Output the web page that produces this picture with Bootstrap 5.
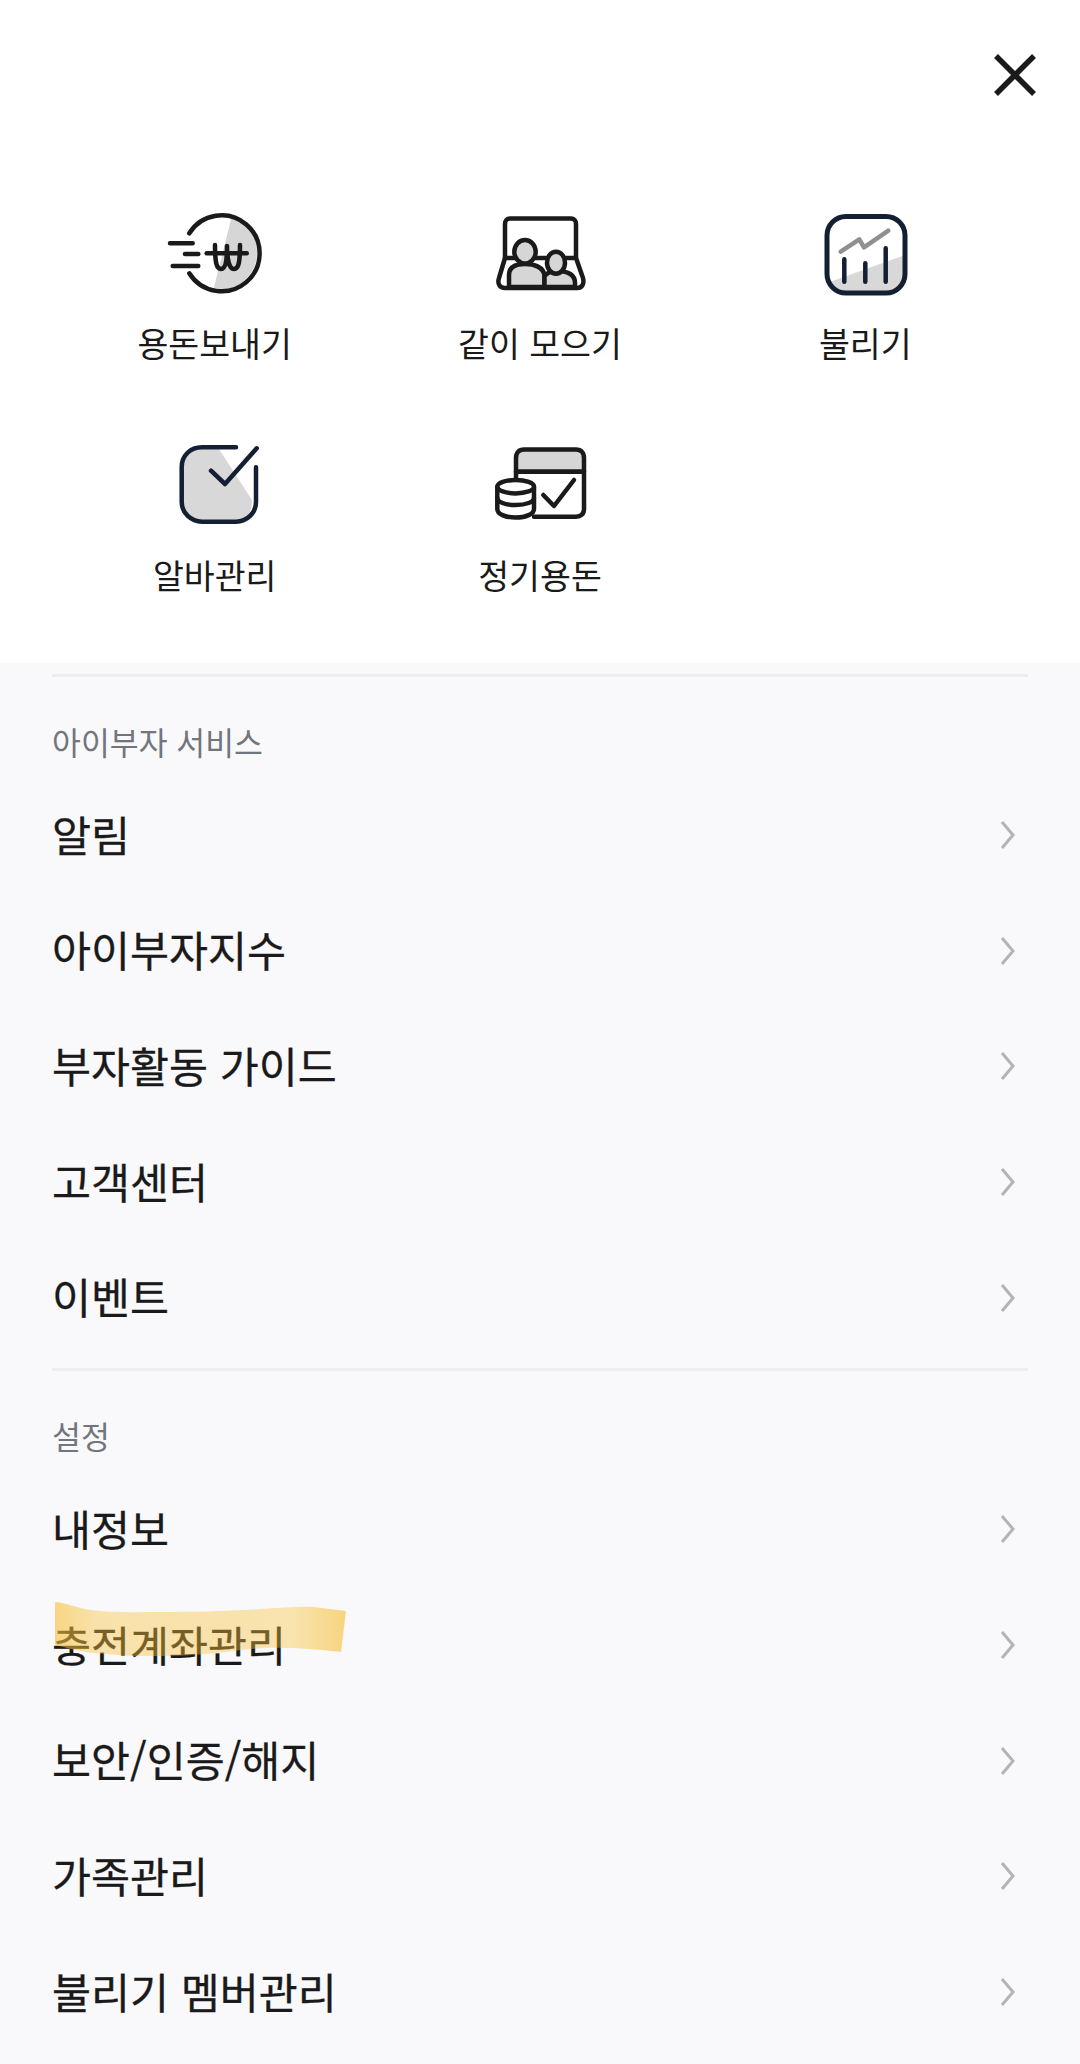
<!DOCTYPE html>
<html lang="ko">
<head>
<meta charset="utf-8">
<title>메뉴</title>
<link href="https://cdn.jsdelivr.net/npm/bootstrap@5.3.0/dist/css/bootstrap.min.css" rel="stylesheet">
<style>
html,body{height:2064px;overflow:hidden}
body{background:#f9f9fc;color:#1a1a1a;font-family:"Noto Sans CJK KR","Noto Sans",sans-serif}
.top-sheet{background:#fff;height:663px}
.close-row{padding:49px 40px 0 0;height:100px}
.close-btn{background:none;border:0;padding:0;line-height:0}
.tile-grid{margin:103px 52px 0}
.tile{height:232px;text-align:center}
.tile svg{display:block;margin:0 auto}
.tile-label{font-size:33.6px;line-height:44px;margin-top:18px;color:#1a1a1a}
.sheet-rule{height:3px;background:#eeeef0;margin:0 52px;border:0;opacity:1}
.rule-a{margin-top:11px}
.rule-b{margin-top:13px}
.sec-title{font-size:31.4px;line-height:44px;color:#72757b;margin:43px 52px 13px}
.menu-row{height:115.7px;background:transparent;border:0;padding:0 12px 0 0;margin:0 0 0 52px;width:976px;font-size:42.4px;color:#1a1a1a;position:relative;-webkit-text-stroke:.3px #1a1a1a}
.menu-row>span{margin-top:-3px}
.swipe{position:absolute;left:2px;top:-12px}
</style>
</head>
<body>
<div class="top-sheet">
  <div class="close-row d-flex justify-content-end">
    <button class="close-btn" type="button" aria-label="닫기">
      <svg width="50" height="50" viewBox="0 0 50 50"><path d="M6 6L44 44M44 6L6 44" stroke="#1a1a1a" stroke-width="5.5" fill="none"/></svg>
    </button>
  </div>
  <div class="row g-0 tile-grid">
    <div class="col-4 tile">
      <svg width="100" height="100" viewBox="0 0 100 100" fill="none" stroke="#1a1a1a" stroke-width="4.5" stroke-linecap="round" stroke-linejoin="round">
        <path d="M66.7 13.6A38 38 0 0 1 48.3 87Z" fill="#d6d6d6" stroke="none"/>
        <path d="M24.3 30.3A38 38 0 1 1 24.3 70.3"/>
        <path d="M5 40.3H27.7M20 51H33.3M7.7 63H33.3"/>
        <path d="M41.7 50.3H81.7"/>
        <path d="M50 42C50 58 51 66 56 66C61 66 62 55 62 43C62 55 64 66 69 66C74 66 75 58 75 42"/>
      </svg>
      <div class="tile-label">용돈보내기</div>
    </div>
    <div class="col-4 tile">
      <svg width="100" height="100" viewBox="0 0 100 100" fill="none" stroke="#1a1a1a" stroke-width="4.5" stroke-linecap="round" stroke-linejoin="round">
        <path d="M15 55V21C15 17.500 17 15.500 20 15.500H81C84 15.500 86 17.500 86 21V55"/>
        <path d="M15 55L9 75C7 81 10 85 15 85H87C92 85 94.500 81 93 75L86 55Z" fill="#fff"/>
        <path d="M19 84V72C19 64 26 61 35 61C44 61 54 64 54.500 73V84Z" fill="#d6d6d6"/>
        <ellipse cx="35" cy="48.700" rx="10.700" ry="11.700" fill="#d6d6d6"/>
        <path d="M54.500 73C58 69 62 68 66 68C75 68 85 70 85 80V84H54.500Z" fill="#d6d6d6"/>
        <ellipse cx="66" cy="59.700" rx="9" ry="11" fill="#d6d6d6"/>
      </svg>
      <div class="tile-label">같이 모으기</div>
    </div>
    <div class="col-4 tile">
      <svg width="100" height="100" viewBox="0 0 100 100" fill="none" stroke-linecap="round" stroke-linejoin="round">
        <path d="M12 80L90 52V72C90 83 83 90 72 90H30C19 90 12 83 12 72Z" fill="#d8d8d8"/>
        <rect x="12" y="13.500" width="78" height="76.500" rx="19" stroke="#141f33" stroke-width="5"/>
        <path d="M25.700 48.700L44.300 36.300L49 44.300L73.300 27.700" stroke="#909090" stroke-width="4.500"/>
        <path d="M29.300 56.300V78.700M50.300 60.300V78.700M70.700 45.300V78.700" stroke="#141f33" stroke-width="4.500"/>
      </svg>
      <div class="tile-label">불리기</div>
    </div>
    <div class="col-4 tile">
      <svg width="100" height="100" viewBox="0 0 100 100" fill="none" stroke="#141f33" stroke-width="4.5" stroke-linecap="round" stroke-linejoin="round">
        <path d="M53.300 13H37C25 13 17 22 17 32V67C17 78 26 87 37 87H71C80 87 87 79 87 65Z" fill="#d8d8d8" stroke="none"/>
        <path d="M71 12.300H37C25 12.300 16.700 21 16.700 32V67C16.700 78 26 86.700 37 86.700H71C82 86.700 91 78 91 67V32.300"/>
        <path d="M46 35.700L60 49L91.700 13.300"/>
      </svg>
      <div class="tile-label">알바관리</div>
    </div>
    <div class="col-4 tile">
      <svg width="100" height="100" viewBox="0 0 100 100" fill="none" stroke="#1a1a1a" stroke-width="4.5" stroke-linecap="round" stroke-linejoin="round">
        <path d="M26 36.700V23C26 17.500 29 14.500 34 14.500H86C91 14.500 94 17.500 94 23V36.700Z" fill="#d6d6d6"/>
        <path d="M26 46V36.700H94V74C94 79 91 81.700 86 81.700H44"/>
        <path d="M53.300 60L64 71L84 45"/>
        <path d="M7.300 51.700V74C7.300 79 15 82.500 25.700 82.500C36 82.500 44 79 44 74V51.700Z" fill="#fff"/>
        <ellipse cx="25.700" cy="51.700" rx="18.300" ry="6.700" fill="#fff"/>
        <path d="M7.300 63C7.300 67 15 70 25.700 70C36 70 44 67 44 63"/>
      </svg>
      <div class="tile-label">정기용돈</div>
    </div>
  </div>
</div>

<hr class="sheet-rule rule-a">
<div class="sec-title">아이부자 서비스</div>
<div class="list-group list-group-flush">
  <div class="list-group-item menu-row d-flex align-items-center justify-content-between"><span>알림</span><svg width="16" height="30" viewBox="0 0 16 30" fill="none"><path d="M2 2L13 15L2 28" stroke="#b4b4b4" stroke-width="3"/></svg></div>
  <div class="list-group-item menu-row d-flex align-items-center justify-content-between"><span>아이부자지수</span><svg width="16" height="30" viewBox="0 0 16 30" fill="none"><path d="M2 2L13 15L2 28" stroke="#b4b4b4" stroke-width="3"/></svg></div>
  <div class="list-group-item menu-row d-flex align-items-center justify-content-between"><span>부자활동 가이드</span><svg width="16" height="30" viewBox="0 0 16 30" fill="none"><path d="M2 2L13 15L2 28" stroke="#b4b4b4" stroke-width="3"/></svg></div>
  <div class="list-group-item menu-row d-flex align-items-center justify-content-between"><span>고객센터</span><svg width="16" height="30" viewBox="0 0 16 30" fill="none"><path d="M2 2L13 15L2 28" stroke="#b4b4b4" stroke-width="3"/></svg></div>
  <div class="list-group-item menu-row d-flex align-items-center justify-content-between"><span>이벤트</span><svg width="16" height="30" viewBox="0 0 16 30" fill="none"><path d="M2 2L13 15L2 28" stroke="#b4b4b4" stroke-width="3"/></svg></div>
</div>

<hr class="sheet-rule rule-b">
<div class="sec-title">설정</div>
<div class="list-group list-group-flush">
  <div class="list-group-item menu-row d-flex align-items-center justify-content-between"><span>내정보</span><svg width="16" height="30" viewBox="0 0 16 30" fill="none"><path d="M2 2L13 15L2 28" stroke="#b4b4b4" stroke-width="3"/></svg></div>
  <div class="list-group-item menu-row d-flex align-items-center justify-content-between">
    <span class="position-relative">충전계좌관리
      <svg class="swipe" width="294" height="60" viewBox="0 0 294 60"><defs><linearGradient id="hl" x1="0" x2="1" y1="0" y2="0"><stop offset="0" stop-color="#f5bf3a" stop-opacity=".62"/><stop offset=".14" stop-color="#f8c139" stop-opacity=".42"/><stop offset=".82" stop-color="#f8c139" stop-opacity=".4"/><stop offset="1" stop-color="#f5bf3a" stop-opacity=".65"/></linearGradient></defs><path d="M1 2C14 3 22 8 36 10C60 13 85 12 110 12C140 12 165 11 190 10C215 9 240 6 260 7L292 11L287 52C260 49 235 47 210 48C190 49 170 53 150 54C130 56 110 56 90 56C70 56 55 54 40 53C25 52 12 47 1 45Z" fill="url(#hl)"/></svg>
    </span>
    <svg width="16" height="30" viewBox="0 0 16 30" fill="none"><path d="M2 2L13 15L2 28" stroke="#b4b4b4" stroke-width="3"/></svg></div>
  <div class="list-group-item menu-row d-flex align-items-center justify-content-between"><span>보안/인증/해지</span><svg width="16" height="30" viewBox="0 0 16 30" fill="none"><path d="M2 2L13 15L2 28" stroke="#b4b4b4" stroke-width="3"/></svg></div>
  <div class="list-group-item menu-row d-flex align-items-center justify-content-between"><span>가족관리</span><svg width="16" height="30" viewBox="0 0 16 30" fill="none"><path d="M2 2L13 15L2 28" stroke="#b4b4b4" stroke-width="3"/></svg></div>
  <div class="list-group-item menu-row d-flex align-items-center justify-content-between"><span>불리기 멤버관리</span><svg width="16" height="30" viewBox="0 0 16 30" fill="none"><path d="M2 2L13 15L2 28" stroke="#b4b4b4" stroke-width="3"/></svg></div>
</div>
<script src="https://cdn.jsdelivr.net/npm/bootstrap@5.3.0/dist/js/bootstrap.bundle.min.js"></script>
</body>
</html>
